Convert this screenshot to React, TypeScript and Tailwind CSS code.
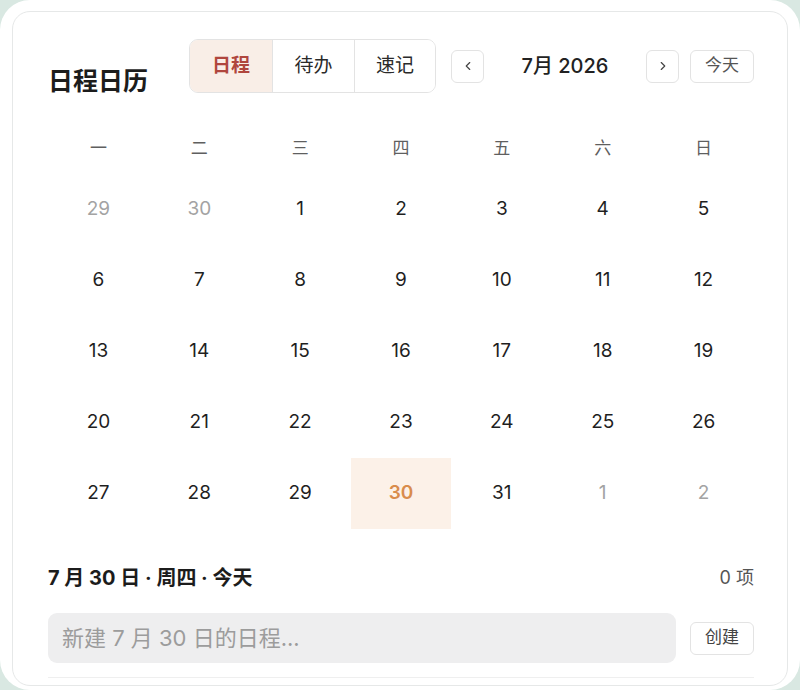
import { ChevronLeft, ChevronRight } from "lucide-react";

const weekdays = ["一", "二", "三", "四", "五", "六", "日"];

type Day = { n: number; muted?: boolean; today?: boolean };

function buildWeeks(): Day[][] {
  const days: Day[] = [{ n: 29, muted: true }, { n: 30, muted: true }];
  for (let i = 1; i <= 31; i++) days.push({ n: i, today: i === 30 });
  days.push({ n: 1, muted: true }, { n: 2, muted: true });
  const weeks: Day[][] = [];
  for (let i = 0; i < days.length; i += 7) weeks.push(days.slice(i, i + 7));
  return weeks;
}

const font = "font-['Inter','Noto_Sans_CJK_SC',sans-serif]";

export default function App() {
  const weeks = buildWeeks();

  return (
    <div className={`h-[690px] w-[800px] overflow-hidden bg-[#d9e8e2] ${font}`}>
      <div className="h-full w-full rounded-[30px] bg-white px-[12px] pt-[11px] pb-[4px]">
        <div className="h-full rounded-[18px] border border-[#e6e8e8] bg-white pl-[35px] pr-[33px] pt-[27px]">
          {/* Header */}
          <div className="flex items-start justify-between">
            <h1 className="mt-[28px] text-[25px] font-bold leading-[28px] text-[#1c1c1c]">日程日历</h1>
            <div className="flex items-center">
              <div className="flex h-[54px] overflow-hidden rounded-[9px] border border-[#e3e3e3]">
                <button className="w-[82px] bg-[#f9eee7] text-[19px] font-semibold text-[#b0463e]">日程</button>
                <button className="w-[82px] border-l border-[#e3e3e3] bg-white text-[19px] text-[#2a2a2a]">待办</button>
                <button className="w-[81px] border-l border-[#e3e3e3] bg-white text-[19px] text-[#2a2a2a]">速记</button>
              </div>
              <button className="ml-[15px] flex h-[33px] w-[33px] items-center justify-center rounded-[6px] border border-[#e3e3e3] text-[#444]">
                <ChevronLeft size={14} strokeWidth={2} />
              </button>
              <div className="w-[162px] text-center text-[20px] font-medium text-[#222]">7月 2026</div>
              <button className="flex h-[33px] w-[33px] items-center justify-center rounded-[6px] border border-[#e3e3e3] text-[#444]">
                <ChevronRight size={14} strokeWidth={2} />
              </button>
              <button className="ml-[11px] h-[33px] w-[64px] rounded-[6px] border border-[#e3e3e3] text-[17px] text-[#555]">今天</button>
            </div>
          </div>

          {/* Weekdays */}
          <div className="mt-[29px] grid grid-cols-7">
            {weekdays.map((w) => (
              <div key={w} className="flex h-[50px] items-center justify-center text-[17px] text-[#5f5f5f]">
                {w}
              </div>
            ))}
          </div>

          {/* Dates */}
          <div className="grid grid-cols-7">
            {weeks.flat().map((d, i) => (
              <div
                key={i}
                className={`flex h-[71px] items-center justify-center text-[19px] ${
                  d.today
                    ? "bg-[#fcf1e8] font-semibold text-[#d98c4c]"
                    : d.muted
                      ? "text-[#a3a3a3]"
                      : "text-[#1f1f1f]"
                }`}
              >
                {d.n}
              </div>
            ))}
          </div>

          {/* Selected day */}
          <div className="mt-[36px] flex items-center justify-between">
            <div className="text-[20px] font-bold leading-[26px] text-[#1c1c1c]">7 月 30 日 · 周四 · 今天</div>
            <div className="text-[18px] leading-[26px] text-[#555]">0 项</div>
          </div>

          <div className="mt-[22px] flex items-center gap-[14px]">
            <input
              className="h-[50px] flex-1 rounded-[9px] bg-[#eeeeef] px-[14px] text-[22px] text-[#333] outline-none placeholder:text-[#9c9c9c]"
              placeholder="新建 7 月 30 日的日程..."
            />
            <button className="h-[33px] w-[64px] rounded-[6px] border border-[#e3e3e3] text-[17px] text-[#444]">创建</button>
          </div>

          <div className="mt-[14px] border-t border-[#efefef]" />
        </div>
      </div>
    </div>
  );
}
